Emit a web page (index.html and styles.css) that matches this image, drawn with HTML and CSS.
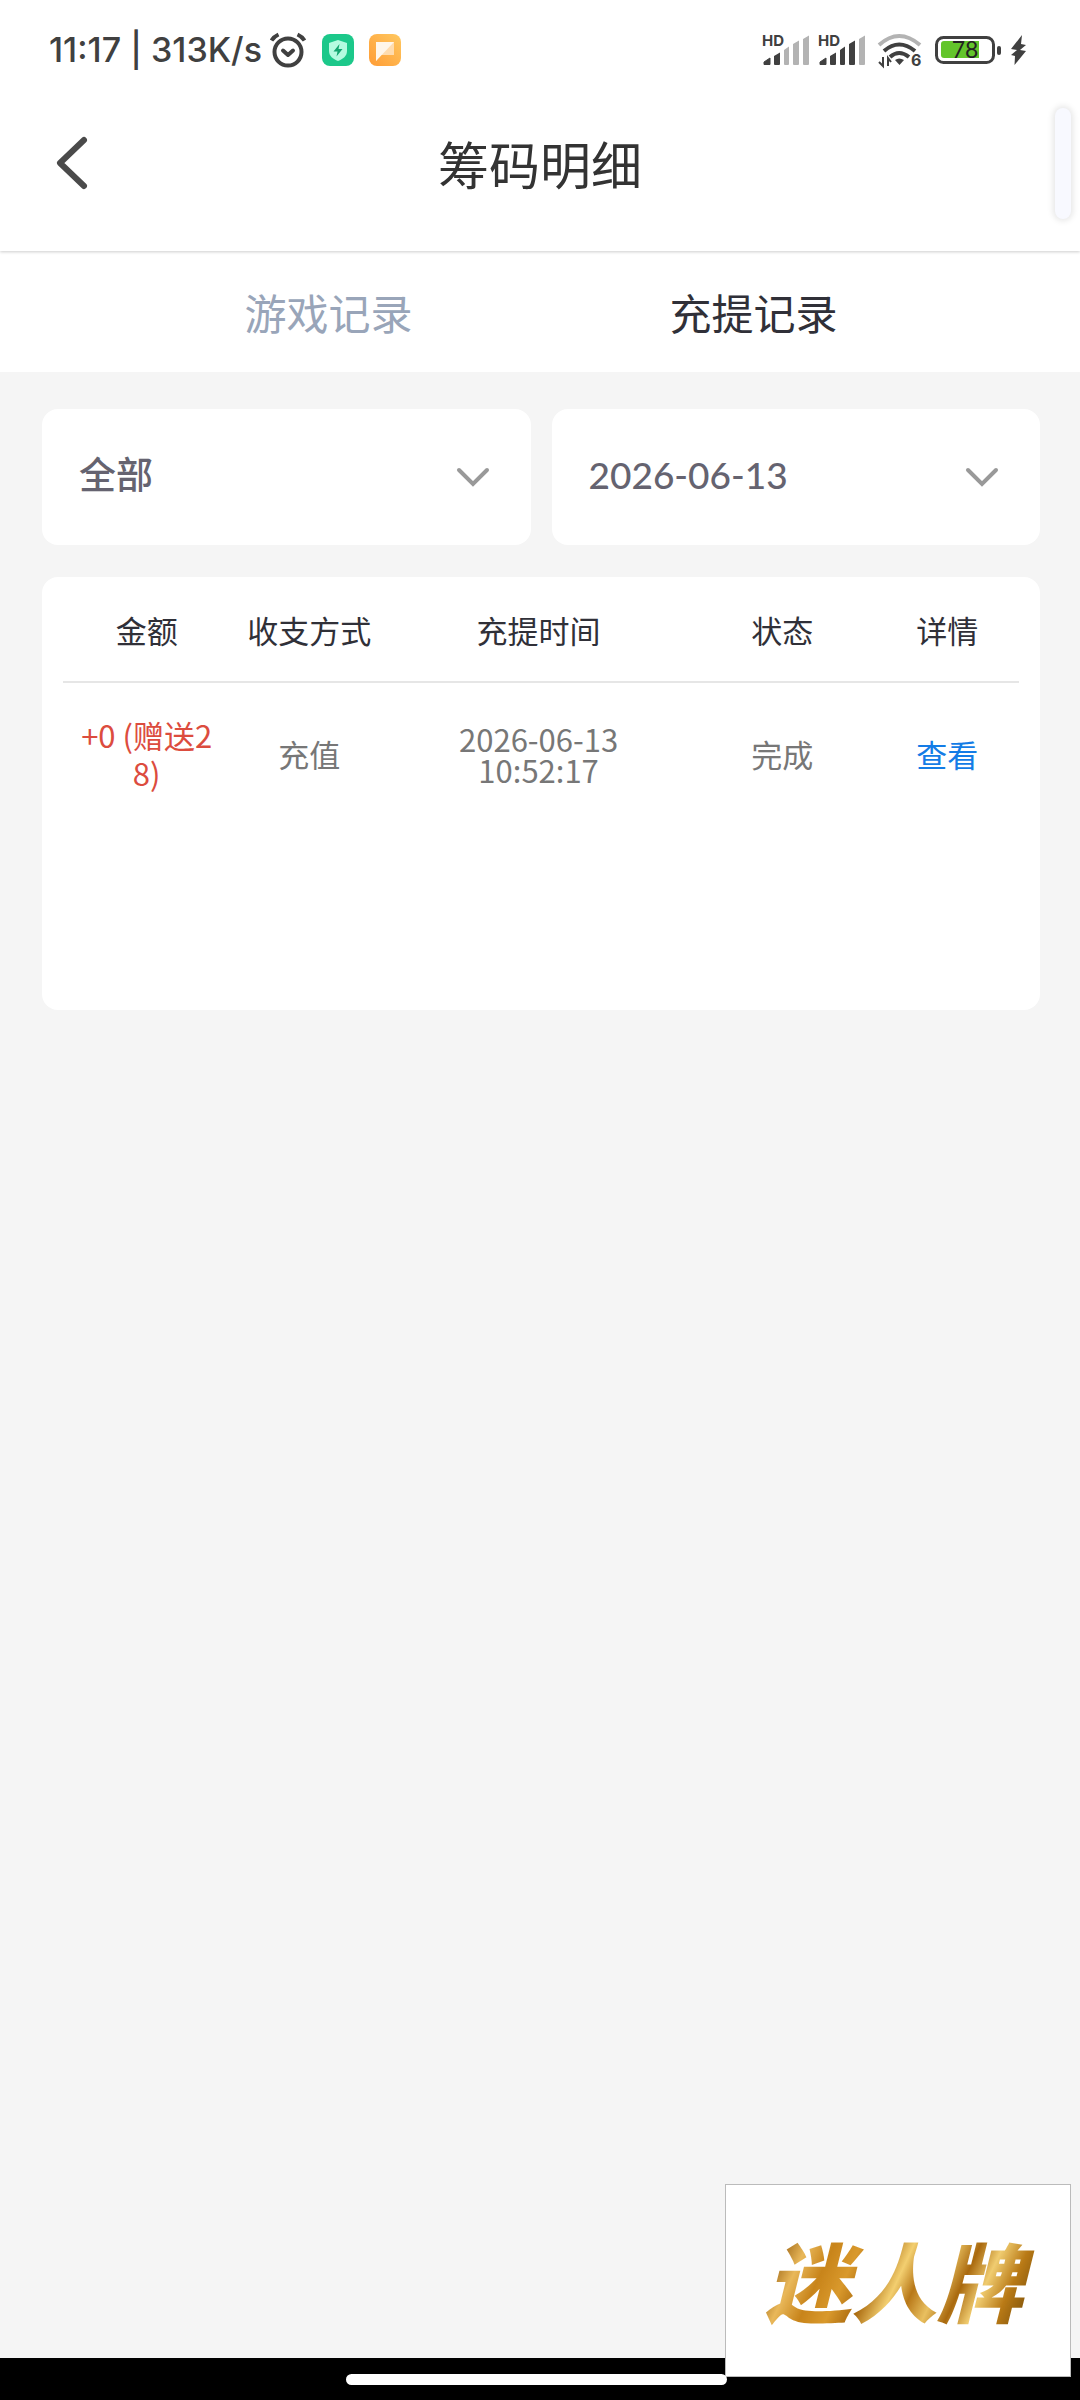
FILE: index.html
```html
<!DOCTYPE html>
<html lang="zh-CN">
<head>
    <meta charset="UTF-8">
    <meta name="viewport" content="width=device-width, initial-scale=1.0">
    <title>筹码明细</title>
    <link rel="stylesheet" href="styles.css">
</head>
<body>
    <div class="status-bar">
        <div class="status-left">
            <span class="status-text">11:17 | 313K/s</span>
            <svg class="alarm" width="38" height="36" viewBox="0 0 38 36" fill="none" stroke="#404040" stroke-width="4" stroke-linecap="round" stroke-linejoin="round">
                <circle cx="19" cy="20" r="13.5"/>
                <path d="M14 18.500l5 4.500 5-4.500"/>
                <path d="M2.500 8.500Q5 4.500 9.500 2.500M35.500 8.500Q33 4.500 28.500 2.500" stroke-linecap="butt"/>
            </svg>
            <svg class="app-icon" width="32" height="32" viewBox="0 0 32 32">
                <rect width="32" height="32" rx="8" fill="#1cc88a"/>
                <path d="M16 6l9 3v8c0 5-4 8-9 10-5-2-9-5-9-10V9z" fill="#b5fbe0"/>
                <path d="M17.500 10l-6 7.500h4l-1 5 6-7.500h-4z" fill="#12a56f"/>
            </svg>
            <svg class="app-icon" width="32" height="32" viewBox="0 0 32 32">
                <defs>
                    <linearGradient id="note" x1="0" y1="1" x2="1" y2="0">
                        <stop offset="0" stop-color="#ff9c35"/>
                        <stop offset="1" stop-color="#ffc860"/>
                    </linearGradient>
                </defs>
                <rect width="32" height="32" rx="8" fill="url(#note)"/>
                <path d="M7 8h18v13H12l-5 6z" fill="#ffdcae"/>
                <path d="M7 8h18L7 27z" fill="#fff6ea"/>
            </svg>
        </div>
        <div class="status-right">
            <svg width="47" height="32" viewBox="0 0 47 32">
                <text class="hd" x="0" y="12">HD</text>
                <path d="M2 30.500v-2.500l6-4v6.500z" fill="#404040" stroke="#404040" stroke-linejoin="round"/>
                <path d="M12 30V22l6-3.500V30a1 1 0 0 1-1 1h-4a1 1 0 0 1-1-1z" fill="#404040"/>
                <path d="M22 30V16l5-3.500V30a1 1 0 0 1-1 1h-3a1 1 0 0 1-1-1zM31 30V10l6-3.500V30a1 1 0 0 1-1 1h-4a1 1 0 0 1-1-1zM41 30V5l6-3.500V30a1 1 0 0 1-1 1h-4a1 1 0 0 1-1-1z" fill="#b3b3b3"/>
            </svg>
            <svg width="47" height="32" viewBox="0 0 47 32">
                <text class="hd" x="0" y="12">HD</text>
                <path d="M2 30.500v-2.500l6-4v6.500z" fill="#404040" stroke="#404040" stroke-linejoin="round"/>
                <path d="M12 30V22l6-3.500V30a1 1 0 0 1-1 1h-4a1 1 0 0 1-1-1zM22 30V16l5-3.500V30a1 1 0 0 1-1 1h-3a1 1 0 0 1-1-1zM31 30V10l6-3.500V30a1 1 0 0 1-1 1h-4a1 1 0 0 1-1-1z" fill="#404040"/>
                <path d="M41 30V5l6-3.500V30a1 1 0 0 1-1 1h-4a1 1 0 0 1-1-1z" fill="#b3b3b3"/>
            </svg>
            <svg class="wifi" width="44" height="34" viewBox="0 0 44 34" fill="none" stroke="#404040" stroke-width="4">
                <path d="M1 12Q21-6 42 12" stroke="#b3b3b3"/>
                <path d="M6 18Q21 5 37 18"/>
                <path d="M12 24Q21 16 31 24"/>
                <path d="M17 27q4-3 9 0l-4.500 5z" fill="#404040" stroke="none"/>
                <path d="M5 24v9l-4-4M10 33v-8l3 4" stroke-width="2"/>
                <text class="wifi-gen" x="33" y="33">6</text>
            </svg>
            <svg class="battery" width="66" height="30" viewBox="0 0 66 30">
                <rect x="1.500" y="2.500" width="57" height="25" rx="7" fill="#fff" stroke="#404040" stroke-width="3"/>
                <path d="M9 6h35v17H9a3 3 0 0 1-3-3V9a3 3 0 0 1 3-3z" fill="#63c52b"/>
                <rect x="62" y="11" width="4" height="9" rx="2" fill="#404040"/>
                <text class="level" x="30" y="23" text-anchor="middle">78</text>
            </svg>
            <svg class="bolt" width="17" height="30" viewBox="0 0 17 30">
                <path d="M12 0L1 14l6 1-6 5 4 1-0.500 9L16 16l-6-1 6-5-5-1z" fill="#404040"/>
            </svg>
        </div>
    </div>

    <header class="header">
        <button class="back-btn" aria-label="返回">
            <svg width="32" height="54" viewBox="0 0 32 54" fill="none" stroke="#4a4a4a" stroke-width="6" stroke-linecap="round" stroke-linejoin="round">
                <path d="M28 4L4 27l24 23"/>
            </svg>
        </button>
        <h1>筹码明细</h1>
    </header>

    <nav class="tabs">
        <a href="#game">游戏记录</a>
        <a href="#funds" class="active">充提记录</a>
    </nav>

    <main>
        <div class="filters">
            <div class="filter">
                <select aria-label="类型">
                    <option>全部</option>
                </select>
                <svg class="arrow" width="34" height="20" viewBox="0 0 34 20" fill="none" stroke="#999" stroke-width="4" stroke-linecap="round">
                    <path d="M3 3l14 14L31 3"/>
                </svg>
            </div>
            <div class="filter">
                <select aria-label="日期">
                    <option>2026-06-13</option>
                </select>
                <svg class="arrow" width="34" height="20" viewBox="0 0 34 20" fill="none" stroke="#999" stroke-width="4" stroke-linecap="round">
                    <path d="M3 3l14 14L31 3"/>
                </svg>
            </div>
        </div>

        <div class="records">
            <table>
                <thead>
                    <tr>
                        <th class="col-amount">金额</th>
                        <th class="col-type">收支方式</th>
                        <th class="col-time">充提时间</th>
                        <th class="col-state">状态</th>
                        <th class="col-detail">详情</th>
                    </tr>
                </thead>
                <tbody>
                    <tr>
                        <td class="amount">+0 (赠送28)</td>
                        <td>充值</td>
                        <td class="time">2026-06-13<br>10:52:17</td>
                        <td>完成</td>
                        <td><a href="#detail">查看</a></td>
                    </tr>
                </tbody>
            </table>
        </div>
    </main>

    <footer class="system-nav">
        <div class="home-bar"></div>
    </footer>

    <!-- Floating items -->
    <div class="side-handle"></div>
    <div class="brand"><span>迷人牌</span></div>
</body>
</html>
```

FILE: styles.css
```css
* {
    box-sizing: border-box;
}
body {
    font-family: "Noto Sans CJK SC", sans-serif;
    margin: 0;
    min-height: 100vh;
    display: flex;
    flex-direction: column;
    background-color: #f5f5f5;
    color: #333;
}
a {
    text-decoration: none;
}
svg {
    display: block;
    overflow: visible;
}

/* Status bar */
.status-bar {
    position: relative;
    z-index: 2;
    display: flex;
    justify-content: space-between;
    align-items: center;
    height: 90px;
    padding: 10px 53px 0 49px;
    background-color: #fff;
}
.status-left,
.status-right {
    display: flex;
    align-items: center;
}
.status-text {
    font-family: Inter, sans-serif;
    font-size: 34px;
    font-weight: 500;
    line-height: 40px;
    color: #404040;
}
.alarm {
    margin-left: 7px;
}
.app-icon {
    margin-left: 15px;
}
.status-right {
    gap: 9px;
}
.hd {
    font-family: Inter, sans-serif;
    font-size: 15px;
    font-weight: 700;
    fill: #404040;
}
.wifi-gen {
    font-family: Inter, sans-serif;
    font-size: 16px;
    font-weight: 700;
    fill: #404040;
    stroke: none;
}
.level {
    font-family: Lato, sans-serif;
    font-size: 23px;
    fill: #222;
}
.wifi {
    margin-left: 4px;
}
.battery {
    margin-left: 4px;
}

/* Header */
.header {
    position: relative;
    z-index: 1;
    display: flex;
    align-items: center;
    justify-content: center;
    height: 161px;
    padding-bottom: 16px;
    background-color: #fff;
    box-shadow: 0 1px 3px rgba(0, 0, 0, 0.2);
}
.header h1 {
    margin: 0;
    font-size: 51px;
    font-weight: 400;
    line-height: 60px;
}
.back-btn {
    position: absolute;
    left: 56px;
    top: 46px;
    padding: 0;
    border: none;
    background: none;
    cursor: pointer;
}

/* Tabs */
.tabs {
    display: flex;
    padding: 0 114px 0 116px;
    background-color: #fff;
}
.tabs a {
    flex: 1;
    text-align: center;
    font-size: 42px;
    line-height: 121px;
    color: #99a5b9;
}
.tabs a.active {
    color: #303038;
}

main {
    flex: 1;
    padding: 37px 40px 37px 42px;
}

/* Filters */
.filters {
    display: flex;
    gap: 21px;
    margin-bottom: 32px;
}
.filter {
    position: relative;
    flex: 1;
}
.filter select {
    display: block;
    width: 100%;
    height: 136px;
    padding: 0 90px 5px 37px;
    border: none;
    border-radius: 16px;
    appearance: none;
    background-color: #fff;
    font-family: Lato, "Noto Sans CJK SC", sans-serif;
    font-size: 37px;
    font-weight: 500;
    color: #656370;
}
.arrow {
    position: absolute;
    right: 41px;
    top: 58px;
    pointer-events: none;
}

/* Records */
.records {
    min-height: 433px;
    padding: 0 21px;
    border-radius: 16px;
    background-color: #fff;
}
table {
    width: 100%;
    table-layout: fixed;
    border-collapse: collapse;
    font-size: 31px;
    line-height: 38px;
    text-align: center;
}
th {
    height: 105px;
    padding: 2px 0 0;
    border-bottom: 2px solid #e6e6e6;
    font-weight: 400;
    color: #303038;
}
td {
    height: 142px;
    padding: 0;
    color: #777;
}
.col-amount {
    width: 17.5%;
}
.col-type {
    width: 16.5%;
}
.col-time {
    width: 31.5%;
}
.col-state {
    width: 19.5%;
}
.col-detail {
    width: 15%;
}
td.amount {
    padding: 0 12px;
    word-break: break-all;
    color: #dc4c3e;
}
td.time {
    line-height: 31px;
}
td a {
    color: #147ce6;
}

/* System navigation */
.system-nav {
    display: flex;
    justify-content: center;
    height: 42px;
    padding: 16px 7px 0 0;
    background-color: #000;
}
.home-bar {
    position: relative;
    z-index: 3;
    width: 381px;
    height: 11px;
    border-radius: 6px;
    background-color: #fff;
}

/* Floating items */
.side-handle {
    position: absolute;
    z-index: 2;
    right: 9px;
    top: 108px;
    width: 16px;
    height: 111px;
    border-radius: 8px;
    background-color: #f8f9ff;
    box-shadow: 0 0 6px 2px rgba(0, 0, 0, 0.1);
}
.brand {
    position: fixed;
    z-index: 2;
    right: 9px;
    bottom: 23px;
    display: flex;
    align-items: center;
    justify-content: center;
    width: 346px;
    height: 193px;
    padding-bottom: 4px;
    border: 1px solid #bbb;
    background-color: #fff;
}
.brand span {
    padding: 0 16px 0 8px;
    font-size: 86px;
    font-weight: 900;
    font-style: italic;
    line-height: 110px;
    color: transparent;
    background-image: linear-gradient(115deg, #a86a10 0%, #9a6212 10%, #e9b85a 18%, #c8841a 26%, #d9992c 34%, #a9690e 42%, #f3cf70 50%, #b87818 56%, #e9c060 63%, #a9690e 70%, #f0cc70 77%, #b97a16 85%, #8a5a0c 92%, #c99028 100%);
    -webkit-background-clip: text;
    background-clip: text;
}
```
